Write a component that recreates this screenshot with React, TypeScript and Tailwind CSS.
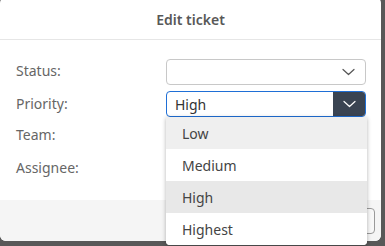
import React from "react";

function Chevron({ color }: { color: string }) {
  return (
    <svg width="13" height="8" viewBox="0 0 13 8" fill="none">
      <path d="M1 1.5 L6.5 6.5 L12 1.5" stroke={color} strokeWidth="1.2" strokeLinecap="round" strokeLinejoin="round" />
    </svg>
  );
}

export default function App() {
  const items = [
    { label: "Low", bg: "bg-[#efefef]" },
    { label: "Medium", bg: "bg-white" },
    { label: "High", bg: "bg-[#e8e8e8]" },
    { label: "Highest", bg: "bg-white" },
  ];
  return (
    <div
      className="relative w-[385px] h-[246px] bg-[#585858] overflow-hidden"
      style={{ fontFamily: '"Noto Sans", "Open Sans", sans-serif' }}
    >
      <div className="w-[381px] h-[244px] -mt-[3px] bg-white rounded-[6px] flex flex-col overflow-hidden">
        <div className="h-[43px] shrink-0 border-b border-[#e6e6e6] flex items-center justify-center pt-[3px]">
          <span className="text-[14px] font-semibold text-[#585858]">Edit ticket</span>
        </div>
        <div className="flex-1 flex flex-col gap-[6px] pt-[19px] pl-[16px]">
          <div className="flex items-center h-[26px]">
            <span className="w-[150px] text-[14px] text-[#666] -mt-[3px]">Status:</span>
            <div className="w-[200px] h-[26px] border border-[#c8c8c8] rounded-[4px] flex items-center justify-end pr-[10px]">
              <Chevron color="#555" />
            </div>
          </div>
          <div className="flex items-center h-[26px]">
            <span className="w-[150px] text-[14px] text-[#666] -mt-[2px]">Priority:</span>
            <div className="w-[200px] h-[26px] border border-[#1f6fd6] rounded-[4px] flex items-stretch overflow-hidden">
              <div className="flex-1 flex items-center pl-[8px] text-[14px] text-[#333]">High</div>
              <div className="w-[32px] bg-[#3a4452] flex items-center justify-center">
                <Chevron color="#ffffff" />
              </div>
            </div>
          </div>
          <div className="flex items-center h-[26px]">
            <span className="w-[150px] text-[14px] text-[#666] -mt-[4px]">Team:</span>
          </div>
          <div className="flex items-center h-[26px]">
            <span className="w-[150px] text-[14px] text-[#666] -mt-[2px]">Assignee:</span>
          </div>
        </div>
        <div className="h-[41px] shrink-0 bg-[#f5f5f5] flex items-center justify-end pr-[6px]">
          <div className="w-[80px] h-[26px] border border-[#9a9a9a] rounded-[4px] bg-[#f8f8f8]" />
        </div>
      </div>
      <div className="absolute left-[166px] top-[117px] w-[201px] bg-white rounded-b-[4px] shadow-[0_1px_4px_rgba(0,0,0,0.3)] flex flex-col overflow-hidden">
        {items.map((it) => (
          <div key={it.label} className={`h-[32px] flex items-center pl-[16px] text-[14px] text-[#444] ${it.bg}`}>
            {it.label}
          </div>
        ))}
      </div>
    </div>
  );
}
